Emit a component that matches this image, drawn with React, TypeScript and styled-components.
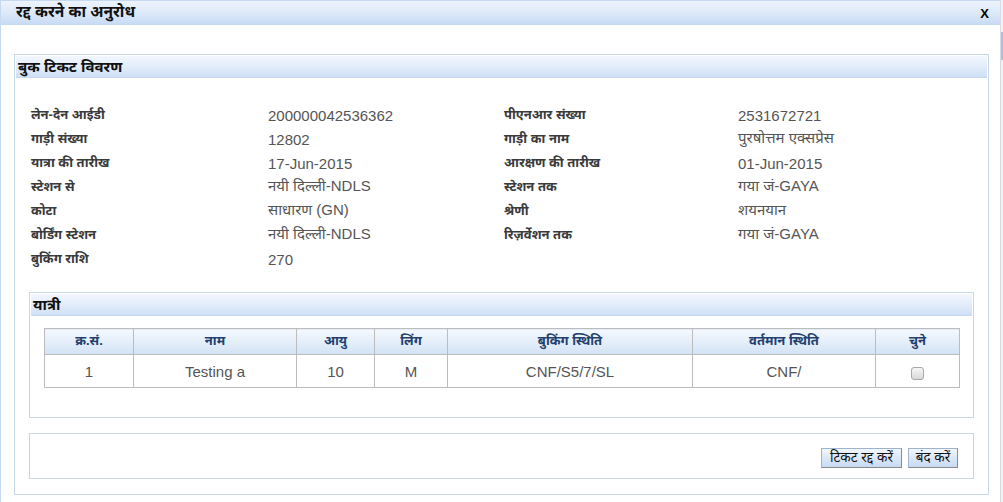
import React from "react";
import styled, { createGlobalStyle } from "styled-components";

const GlobalStyle = createGlobalStyle`
  html, body { margin: 0; padding: 0; background: #ffffff; }
  body {
    font-family: "Liberation Sans", "Noto Sans Devanagari", "Lohit Devanagari", "Noto Sans", sans-serif;
    color: #333;
  }
`;

const Page = styled.div`
  display: flex;
  width: 1003px;
  height: 502px;
  overflow: hidden;
`;

const Dialog = styled.div`
  width: 999px;
  height: 502px;
  border-left: 1px solid #c5d9f1;
  display: flex;
  flex-direction: column;
  background: #fff;
`;

const RightStrip = styled.div`
  width: 3px;
  height: 502px;
  background: linear-gradient(to bottom, #f3f3f3 0 32px, #aebfd6 32px 60px, #eef0f2 60px);
  border-left: 1px solid #d4dbe4;
  box-sizing: border-box;
`;

const TitleBar = styled.div`
  height: 25px;
  flex: none;
  display: flex;
  align-items: center;
  justify-content: space-between;
  padding: 0 11px 0 15px;
  background: linear-gradient(to bottom, #edf3fc 0%, #dde9f9 50%, #c6daf4 100%);
  border-top: 1px solid #c5d9f1;
  box-sizing: border-box;
`;

const Title = styled.span`
  font-size: 15.5px;
  font-weight: bold;
  color: #111;
`;

const CloseX = styled.span`
  font-family: "Liberation Sans", sans-serif;
  font-size: 13px;
  font-weight: bold;
  color: #000;
  cursor: pointer;
`;

const Body = styled.div`
  padding: 29px 11px 0 13px;
`;

const Panel = styled.div<{ $mt?: number; $mb?: number }>`
  border: 1px solid #c6d8e8;
  padding: 1px;
  margin-top: ${(p) => p.$mt ?? 0}px;
  margin-bottom: ${(p) => p.$mb ?? 0}px;
`;

const SectionHeader = styled.div`
  height: 22px;
  line-height: 22px;
  padding-left: 2px;
  font-size: 15px;
  font-weight: bold;
  color: #111;
  background: linear-gradient(to bottom, #f3f7fd 0%, #e2ecfa 50%, #cfe0f6 100%);
  border-bottom: 1px solid #c6d8ee;
  box-sizing: border-box;
`;

const DetailsGrid = styled.div`
  display: grid;
  grid-template-columns: 237px 236px 234px 1fr;
  grid-auto-rows: 24px;
  align-items: center;
  margin: 25px 0 0 15px;
`;

const Label = styled.span`
  font-size: 13px;
  font-weight: bold;
  color: #3a3a3a;
`;

const Value = styled.span`
  font-size: 15px;
  color: #555;
`;

const Inner = styled.div`
  padding: 0 13px;
  margin-top: 21px;
`;

const Table = styled.table`
  border-collapse: collapse;
  margin: 12px 12px 28px 13px;
  table-layout: fixed;
`;

const Th = styled.th<{ $w: number }>`
  width: ${(p) => p.$w}px;
  height: 25px;
  padding: 0;
  border: 1px solid #bcbcbc;
  font-size: 13px;
  font-weight: bold;
  color: #22406e;
  background: linear-gradient(to bottom, #f4f8fd 0%, #e3edf9 55%, #d2e2f5 100%);
  text-align: center;
`;

const Td = styled.td`
  height: 32px;
  padding: 0;
  border: 1px solid #bcbcbc;
  font-size: 15px;
  color: #555;
  text-align: center;
`;

const Check = styled.input`
  appearance: none;
  width: 13px;
  height: 13px;
  margin: 3px 0 0 0;
  border: 1px solid #a8a8a8;
  border-radius: 3px;
  background: linear-gradient(to bottom, #f6f6f6, #d9d9d9);
  vertical-align: middle;
`;

const ButtonBar = styled.div`
  height: 42px;
  display: flex;
  justify-content: flex-end;
  align-items: flex-start;
  gap: 6px;
  padding: 13px 14px 0 0;
  box-sizing: border-box;
`;

const Button = styled.button<{ $w: number }>`
  width: ${(p) => p.$w}px;
  height: 20px;
  padding: 0;
  font-family: "Liberation Sans", "Noto Sans Devanagari", "Lohit Devanagari", sans-serif;
  font-size: 13.5px;
  color: #111;
  line-height: 18px;
  border: 1px solid #9fb3cc;
  border-right-color: #8a8a8a;
  border-bottom-color: #8a8a8a;
  background: linear-gradient(to bottom, #f1f6fd 0%, #dbe7f8 50%, #c7daf3 100%);
  cursor: pointer;
`;

const details: [string, string, string, string][] = [
  ["लेन-देन आईडी", "200000042536362", "पीएनआर संख्या", "2531672721"],
  ["गाड़ी संख्या", "12802", "गाड़ी का नाम", "पुरषोत्तम एक्सप्रेस"],
  ["यात्रा की तारीख", "17-Jun-2015", "आरक्षण की तारीख", "01-Jun-2015"],
  ["स्टेशन से", "नयी दिल्ली-NDLS", "स्टेशन तक", "गया जं-GAYA"],
  ["कोटा", "साधारण (GN)", "श्रेणी", "शयनयान"],
  ["बोर्डिंग स्टेशन", "नयी दिल्ली-NDLS", "रिज़र्वेशन तक", "गया जं-GAYA"],
  ["बुकिंग राशि", "270", "", ""],
];

const columns: [string, number][] = [
  ["क्र.सं.", 88],
  ["नाम", 162],
  ["आयु", 77],
  ["लिंग", 72],
  ["बुकिंग स्थिति", 244],
  ["वर्तमान स्थिति", 182],
  ["चुने", 83],
];

export default function App() {
  return (
    <>
      <GlobalStyle />
      <Page>
        <Dialog>
          <TitleBar>
            <Title>रद्द करने का अनुरोध</Title>
            <CloseX>X</CloseX>
          </TitleBar>
          <Body>
            <Panel>
              <SectionHeader>बुक टिकट विवरण</SectionHeader>
              <DetailsGrid>
                {details.map((r, i) => (
                  <React.Fragment key={i}>
                    <Label>{r[0]}</Label>
                    <Value>{r[1]}</Value>
                    <Label>{r[2]}</Label>
                    <Value>{r[3]}</Value>
                  </React.Fragment>
                ))}
              </DetailsGrid>
              <Inner>
                <Panel>
                  <SectionHeader>यात्री</SectionHeader>
                  <Table>
                    <thead>
                      <tr>
                        {columns.map(([c, w]) => (
                          <Th key={c} $w={w}>
                            {c}
                          </Th>
                        ))}
                      </tr>
                    </thead>
                    <tbody>
                      <tr>
                        <Td>1</Td>
                        <Td>Testing a</Td>
                        <Td>10</Td>
                        <Td>M</Td>
                        <Td>CNF/S5/7/SL</Td>
                        <Td>CNF/</Td>
                        <Td>
                          <Check type="checkbox" />
                        </Td>
                      </tr>
                    </tbody>
                  </Table>
                </Panel>
                <Panel $mt={15} $mb={14}>
                  <ButtonBar>
                    <Button $w={81}>टिकट रद्द करें</Button>
                    <Button $w={50}>बंद करें</Button>
                  </ButtonBar>
                </Panel>
              </Inner>
            </Panel>
          </Body>
        </Dialog>
        <RightStrip />
      </Page>
    </>
  );
}
